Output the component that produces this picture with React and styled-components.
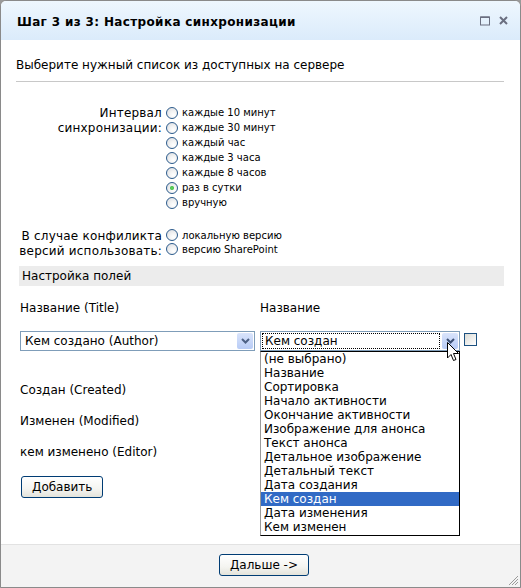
import React from "react";
import styled, { createGlobalStyle } from "styled-components";

const Global = createGlobalStyle`
  html, body { margin: 0; padding: 0; background: #9a9a9a; }
  body { font-family: "DejaVu Sans", Verdana, sans-serif; color: #000; }
  * { box-sizing: border-box; }
`;

const UI = `"DejaVu Sans", Verdana, sans-serif`;

const Window = styled.div`
  position: relative;
  width: 521px;
  height: 588px;
  display: flex;
  flex-direction: column;
  background: #fff;
  border: 1px solid #8a8a8a;
  border-radius: 6px 6px 0 0;
  overflow: hidden;
`;

const TitleBar = styled.div`
  height: 39px;
  flex: none;
  display: flex;
  align-items: center;
  padding: 0 12px 0 16px;
  background: linear-gradient(#eef7fe, #dbebfb);
`;

const Title = styled.div`
  flex: 1;
  font: bold 12px ${UI};
  letter-spacing: 0.35px;
  padding-top: 2px;
`;

const TitleIcons = styled.div`
  display: flex;
  align-items: center;
  gap: 9px;
  color: #6b6f80;
`;

const Body = styled.div`
  flex: 1;
  display: flex;
  flex-direction: column;
  padding: 18px 15px 0 15px;
  font: 12px ${UI};
`;

const Intro = styled.div`
  line-height: 15px;
`;

const Separator = styled.div`
  height: 1px;
  background: #c8c8c8;
  margin: 8px 1px 0 0;
`;

const OptionGroup = styled.div`
  display: flex;
  align-items: flex-start;
  margin-top: ${(p) => p.$top}px;
`;

const GroupLabel = styled.div`
  width: 150px;
  text-align: right;
  font: 12px/15px ${UI};
  letter-spacing: 0.2px;
  padding-top: 1px;
  padding-right: 4px;
`;

const Options = styled.div`
  display: flex;
  flex-direction: column;
`;

const OptionRow = styled.label`
  display: flex;
  align-items: center;
  height: ${(p) => p.$h}px;
  font: 10px ${UI};
  gap: 4px;
`;

const Radio = styled.span`
  width: 12px;
  height: 12px;
  border-radius: 50%;
  border: 1px solid #2c5b8c;
  background: radial-gradient(circle at 65% 70%, #ffffff 0%, #f3f3f3 40%, #d6d9de 100%);
  display: flex;
  align-items: center;
  justify-content: center;
  &::after {
    content: "";
    width: 4px;
    height: 4px;
    border-radius: 50%;
    background: ${(p) => (p.$checked ? "radial-gradient(#6ae06a, #1f9e1f)" : "transparent")};
  }
`;

const SectionHeader = styled.div`
  margin: 7px 1px 0 3px;
  height: 20px;
  background: #ececec;
  font: 12px/20px ${UI};
  padding-left: 3px;
`;

const FieldRow = styled.div`
  display: flex;
  align-items: center;
  height: ${(p) => p.$h}px;
  margin-top: ${(p) => p.$mt || 0}px;
  padding-left: 4px;
`;

const FieldCell = styled.div`
  width: 240px;
  flex: none;
  position: relative;
  display: flex;
  align-items: center;
`;

const SelectBox = styled.div`
  width: ${(p) => p.$w}px;
  height: 20px;
  border: 1px solid #7f9db9;
  background: #fff;
  display: flex;
  align-items: center;
  padding: 1px;
  font: 12px ${UI};
`;

const SelectText = styled.div`
  flex: 1;
  height: 100%;
  display: flex;
  align-items: center;
  padding-left: 3px;
  margin-right: 2px;
  outline: ${(p) => (p.$focus ? "1px dotted #000" : "none")};
  outline-offset: -1px;
`;

const SelectArrow = styled.div`
  width: 16px;
  height: 16px;
  border-radius: 2px;
  background: linear-gradient(#d9e4fb, #b8ccf6);
  display: flex;
  align-items: center;
  justify-content: center;
`;

const Checkbox = styled.span`
  width: 13px;
  height: 13px;
  border: 1px solid #1c5180;
  background: linear-gradient(135deg, #dcdcd6, #ffffff);
  margin-left: 4px;
  align-self: flex-start;
  margin-top: 2px;
`;

const DropList = styled.div`
  position: absolute;
  left: 0;
  top: 20px;
  width: 200px;
  border: 1px solid #000;
  border-left-color: #9a9a9a;
  background: #fff;
  padding: 0 0 1px 0;
  z-index: 2;
`;

const DropItem = styled.div`
  height: 14px;
  font: 12px/14px ${UI};
  padding-left: 3px;
  white-space: nowrap;
  background: ${(p) => (p.$sel ? "#316ac5" : "transparent")};
  color: ${(p) => (p.$sel ? "#fff" : "#000")};
`;

const Cursor = styled.svg`
  position: absolute;
  left: 187px;
  top: 11px;
  z-index: 3;
`;

const Button = styled.button`
  font: 12px ${UI};
  height: 22px;
  padding: 0 10px;
  border: 1px solid #003c74;
  border-radius: 3px;
  background: linear-gradient(#ffffff, #f4f4f0 60%, #e3e3db);
  color: #000;
`;

const AddRow = styled.div`
  padding-left: 5px;
  margin-top: 9px;
`;

const Footer = styled.div`
  height: 43px;
  flex: none;
  border-top: 1px solid #e2e2e2;
  background: #f3f3f3;
  display: flex;
  align-items: center;
  justify-content: center;
  padding-left: 7px;
  padding-bottom: 3px;
`;

const Grip = styled.svg`
  position: absolute;
  right: 1px;
  bottom: 1px;
`;

const interval = [
  "каждые 10 минут",
  "каждые 30 минут",
  "каждый час",
  "каждые 3 часа",
  "каждые 8 часов",
  "раз в сутки",
  "вручную",
];

const conflicts = ["локальную версию", "версию SharePoint"];

const items = [
  "(не выбрано)",
  "Название",
  "Сортировка",
  "Начало активности",
  "Окончание активности",
  "Изображение для анонса",
  "Текст анонса",
  "Детальное изображение",
  "Детальный текст",
  "Дата создания",
  "Кем создан",
  "Дата изменения",
  "Кем изменен",
];

const Chevron = ({ color = "#4d6185" }) => (
  <svg width="9" height="6" viewBox="0 0 9 6">
    <path d="M1 1 L4.5 4.5 L8 1" fill="none" stroke={color} strokeWidth="2" />
  </svg>
);

export default function App() {
  return (
    <>
      <Global />
      <Window>
        <TitleBar>
          <Title>Шаг 3 из 3: Настройка синхронизации</Title>
          <TitleIcons>
            <svg width="10" height="10" viewBox="0 0 10 10">
              <rect x="0.5" y="1" width="9" height="8" fill="none" stroke="#6b6f80" strokeWidth="1" />
              <rect x="0.5" y="0.5" width="9" height="1.5" fill="#6b6f80" />
            </svg>
            <svg width="9" height="9" viewBox="0 0 9 9">
              <path d="M1 1 L8 8 M8 1 L1 8" stroke="#6b6f80" strokeWidth="2" />
            </svg>
          </TitleIcons>
        </TitleBar>
        <Body>
          <Intro>Выберите нужный список из доступных на сервере</Intro>
          <Separator />
          <OptionGroup $top={23}>
            <GroupLabel>
              Интервал
              <br />
              синхронизации:
            </GroupLabel>
            <Options>
              {interval.map((t, i) => (
                <OptionRow key={t} $h={15}>
                  <Radio $checked={i === 5} />
                  {t}
                </OptionRow>
              ))}
            </Options>
          </OptionGroup>
          <OptionGroup $top={18}>
            <GroupLabel>
              В случае конфиликта
              <br />
              версий использовать:
            </GroupLabel>
            <Options>
              {conflicts.map((t) => (
                <OptionRow key={t} $h={14}>
                  <Radio />
                  {t}
                </OptionRow>
              ))}
            </Options>
          </OptionGroup>
          <SectionHeader>Настройка полей</SectionHeader>
          <FieldRow $h={31} $mt={6}>
            <FieldCell>Название (Title)</FieldCell>
            <FieldCell>Название</FieldCell>
          </FieldRow>
          <FieldRow $h={20} $mt={8}>
            <FieldCell>
              <SelectBox $w={235}>
                <SelectText>Кем создано (Author)</SelectText>
                <SelectArrow>
                  <Chevron />
                </SelectArrow>
              </SelectBox>
            </FieldCell>
            <FieldCell>
              <SelectBox $w={200}>
                <SelectText $focus>Кем создан</SelectText>
                <SelectArrow>
                  <Chevron color="#3b4f74" />
                </SelectArrow>
              </SelectBox>
              <Checkbox />
              <DropList>
                {items.map((t) => (
                  <DropItem key={t} $sel={t === "Кем создан"}>
                    {t}
                  </DropItem>
                ))}
              </DropList>
              <Cursor width="12" height="20" viewBox="0 0 12 20">
                <path
                  d="M0.5 0.5 L0.5 16 L4 12.5 L6.5 18.5 L9 17.5 L6.5 11.5 L11.5 11.5 Z"
                  fill="#fff"
                  stroke="#000"
                  strokeWidth="1"
                />
              </Cursor>
            </FieldCell>
          </FieldRow>
          <FieldRow $h={31} $mt={23}>
            <FieldCell>Создан (Created)</FieldCell>
          </FieldRow>
          <FieldRow $h={31}>
            <FieldCell>Изменен (Modified)</FieldCell>
          </FieldRow>
          <FieldRow $h={31}>
            <FieldCell>кем изменено (Editor)</FieldCell>
          </FieldRow>
          <AddRow>
            <Button>Добавить</Button>
          </AddRow>
        </Body>
        <Footer>
          <Button>Дальше -&gt;</Button>
        </Footer>
        <Grip width="12" height="12" viewBox="0 0 12 12">
          <path d="M11 2 L2 11 M11 5 L5 11 M11 8 L8 11" stroke="#9a9a9a" strokeWidth="1" />
        </Grip>
      </Window>
    </>
  );
}
